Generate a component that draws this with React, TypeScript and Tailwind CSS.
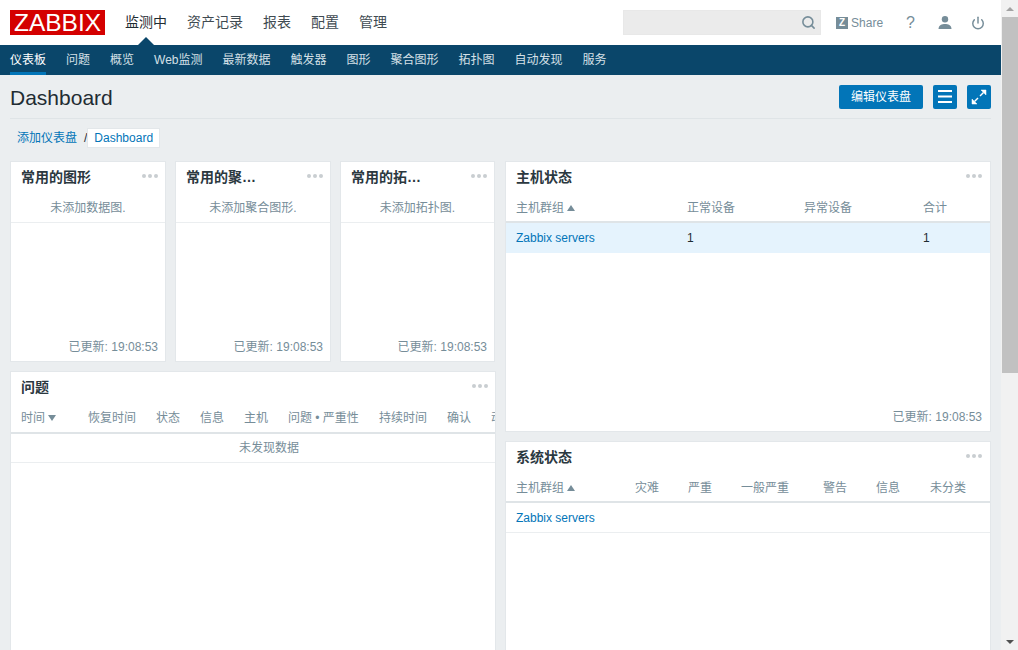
import { Search, Power } from 'lucide-react';

const topMenu = ['资产记录', '报表', '配置', '管理'];
const subMenu = ['问题', '概览', 'Web监测', '最新数据', '触发器', '图形', '聚合图形', '拓扑图', '自动发现', '服务'];

const problemCols = [
  { label: '恢复时间', w: 'w-[68px]' },
  { label: '状态', w: 'w-[44px]' },
  { label: '信息', w: 'w-[44px]' },
  { label: '主机', w: 'w-[44px]' },
  { label: '问题 • 严重性', w: 'w-[91px]' },
  { label: '持续时间', w: 'w-[68px]' },
  { label: '确认', w: 'w-[44px]' },
  { label: '动作', w: 'w-[35px]' },
];

const statusCols = [
  { label: '灾难', w: 'w-[53px]' },
  { label: '严重', w: 'w-[53px]' },
  { label: '一般严重', w: 'w-[82px]' },
  { label: '警告', w: 'w-[53px]' },
  { label: '信息', w: 'w-[54px]' },
  { label: '未分类', w: 'w-[50px]' },
];

function Dots() {
  return (
    <div className="flex gap-[1.5px] mt-[-3px]">
      <span className="w-[4.5px] h-[4.5px] rounded-full bg-[#c9ced1]" />
      <span className="w-[4.5px] h-[4.5px] rounded-full bg-[#c9ced1]" />
      <span className="w-[4.5px] h-[4.5px] rounded-full bg-[#c9ced1]" />
    </div>
  );
}

function WidgetHead({ title, pr = 'pr-[7px]' }: { title: string; pr?: string }) {
  return (
    <div className={`h-[31px] pl-[10px] flex items-center justify-between shrink-0 ${pr}`}>
      <h4 className="text-[14px] font-bold text-[#2b383f] whitespace-nowrap">{title}</h4>
      <Dots />
    </div>
  );
}

function Updated({ pr = 'pr-[7px]' }: { pr?: string }) {
  return <div className={`h-[29px] flex items-center justify-end text-[#768d99] ${pr}`}>已更新: 19:08:53</div>;
}

function FavWidget({ title, empty, className }: { title: string; empty: string; className: string }) {
  return (
    <section className={`h-[201px] bg-white border border-[#e3e7ea] flex flex-col ${className}`}>
      <WidgetHead title={title} />
      <div className="h-[30px] border-b border-[#ebeef0] flex items-center justify-center text-[#768d99]">{empty}</div>
      <div className="flex-1" />
      <Updated />
    </section>
  );
}

function SortUp() {
  return <span className="inline-block ml-[3px] border-x-[4px] border-x-transparent border-b-[6px] border-b-[#768d99]" />;
}

function SortDown() {
  return <span className="inline-block ml-[3px] border-x-[4px] border-x-transparent border-t-[6px] border-t-[#768d99]" />;
}

export default function App() {
  return (
    <div className="h-[650px] overflow-hidden flex text-[12px] text-[#1f2c33] font-['Liberation_Sans','Noto_Sans_CJK_SC',sans-serif]">
      <div className="w-[1001px] h-full overflow-hidden bg-[#ebeef0]">
        <header className="h-[45px] bg-white pl-[10px] pr-[16px] flex items-center">
          <div className="w-[95px] h-[25px] bg-[#d40000] text-white text-[24.5px] leading-[25px] text-center">ZABBIX</div>
          <nav className="ml-[20px] flex gap-[20px] text-[14px] text-[#1f2c33]">
            <a className="relative">
              监测中
              <span className="absolute left-1/2 -translate-x-1/2 top-[25px] border-x-[8px] border-x-transparent border-b-[8px] border-b-[#0a466a]" />
            </a>
            {topMenu.map((m) => (
              <a key={m} className="text-[#3f4b52]">{m}</a>
            ))}
          </nav>
          <div className="ml-auto w-[198px] h-[25px] bg-[#ebebeb] border border-[#e8e8e8] flex items-center justify-end pr-[4px]">
            <Search className="w-[15px] h-[15px] text-[#768d99]" strokeWidth={2.5} />
          </div>
          <div className="ml-[15px] flex items-center text-[#768d99]">
            <span className="w-[12px] h-[12px] bg-[#768d99] text-white text-[10px] leading-[12px] font-bold text-center">Z</span>
            <span className="ml-[3px]">Share</span>
          </div>
          <span className="ml-[23px] text-[16px] text-[#768d99]">?</span>
          <svg className="ml-[23px] text-[#768d99]" width="14" height="13" viewBox="0 0 14 13" fill="currentColor">
            <circle cx="7" cy="3.3" r="3.2" />
            <path d="M0.5 13C0.5 9.2 4 8 7 8s6.500 1.200 6.500 5Z" />
          </svg>
          <Power className="ml-[19px] w-[14px] h-[14px] text-[#768d99]" strokeWidth={2.5} />
        </header>

        <nav className="h-[30px] bg-[#0a466a] pl-[10px] flex gap-[20px] text-[#d5e0e7]">
          <a className="h-full flex items-center text-white border-b-[3px] border-[#0275b8] pt-[3px]">仪表板</a>
          {subMenu.map((m) => (
            <a key={m} className="h-full flex items-center">{m}</a>
          ))}
        </nav>

        <div className="mx-[10px] h-[44px] border-b border-[#dfe4e7] flex items-center justify-between">
          <h1 className="text-[21px] text-[#1f2c33] mt-[2px]">Dashboard</h1>
          <div className="flex gap-[10px]">
            <button className="w-[84px] h-[24px] rounded-[2px] bg-[#0275b8] text-white">编辑仪表盘</button>
            <button className="w-[24px] h-[24px] rounded-[2px] bg-[#0275b8] text-white flex items-center justify-center">
              <svg width="14" height="13" viewBox="0 0 14 13" fill="currentColor">
                <rect x="0" y="0" width="14" height="2" />
                <rect x="0" y="5.500" width="14" height="2" />
                <rect x="0" y="11" width="14" height="2" />
              </svg>
            </button>
            <button className="w-[24px] h-[24px] rounded-[2px] bg-[#0275b8] text-white">
              <svg width="24" height="24" viewBox="0 0 24 24" fill="currentColor" stroke="currentColor">
                <path d="M19 5v5l-5-5Z" strokeWidth="0.5" />
                <path d="M16.500 7.500L13 11" strokeWidth="1.500" fill="none" />
                <path d="M5 19v-5l5 5Z" strokeWidth="0.5" />
                <path d="M7.500 16.500L11 13" strokeWidth="1.500" fill="none" />
              </svg>
            </button>
          </div>
        </div>

        <div className="mt-[9px] ml-[17px] h-[20px] flex items-center text-[#0275b8]">
          <a>添加仪表盘</a>
          <span className="ml-[7px] text-[#1f2c33]">/</span>
          <a className="h-[20px] px-[6px] bg-white border border-[#e3e7ea] flex items-center">Dashboard</a>
        </div>

        <div className="mt-[13px] ml-[10px] flex gap-[9px] items-start">
          <div className="w-[486px] flex flex-col gap-[9px]">
            <div className="flex gap-[9px]">
              <FavWidget title="常用的图形" empty="未添加数据图." className="w-[156px]" />
              <FavWidget title="常用的聚…" empty="未添加聚合图形." className="w-[156px]" />
              <FavWidget title="常用的拓…" empty="未添加拓扑图." className="w-[155px]" />
            </div>
            <section className="h-[400px] bg-white border border-[#e3e7ea] overflow-hidden">
              <WidgetHead title="问题" />
              <div className="w-[516px]">
                <div className="h-[31px] border-b-2 border-[#dfe4e7] pl-[10px] flex items-center text-[#768d99] whitespace-nowrap">
                  <span className="w-[67px] shrink-0 flex items-center">时间<SortDown /></span>
                  {problemCols.map((c) => (
                    <span key={c.label} className={`shrink-0 ${c.w}`}>{c.label}</span>
                  ))}
                </div>
                <div className="h-[29px] border-b border-[#ebeef0] flex items-center justify-center text-[#768d99]">未发现数据</div>
              </div>
            </section>
          </div>

          <div className="w-[486px] flex flex-col gap-[9px]">
            <section className="h-[271px] bg-white border border-[#e3e7ea] flex flex-col">
              <WidgetHead title="主机状态" pr="pr-[8px]" />
              <div className="h-[30px] pt-[2px] border-b-2 border-[#dfe4e7] pl-[10px] flex items-center text-[#768d99]">
                <span className="w-[171px] flex items-center">主机群组<SortUp /></span>
                <span className="w-[117px]">正常设备</span>
                <span className="w-[119px]">异常设备</span>
                <span>合计</span>
              </div>
              <div className="h-[30px] bg-[#e5f3fd] pl-[10px] flex items-center">
                <a className="w-[171px] text-[#0275b8]">Zabbix servers</a>
                <span className="w-[236px]">1</span>
                <span>1</span>
              </div>
              <div className="flex-1" />
              <Updated pr="pr-[8px]" />
            </section>
            <section className="h-[300px] bg-white border border-[#e3e7ea]">
              <WidgetHead title="系统状态" pr="pr-[8px]" />
              <div className="h-[30px] pt-[2px] border-b-2 border-[#dfe4e7] pl-[10px] flex items-center text-[#768d99]">
                <span className="w-[119px] flex items-center">主机群组<SortUp /></span>
                {statusCols.map((c) => (
                  <span key={c.label} className={c.w}>{c.label}</span>
                ))}
              </div>
              <div className="h-[30px] border-b border-[#ebeef0] pl-[10px] flex items-center">
                <a className="text-[#0275b8]">Zabbix servers</a>
              </div>
            </section>
          </div>
        </div>
      </div>

      <div className="w-[17px] h-full bg-[#f1f1f1] flex flex-col items-center">
        <div className="h-[17px] flex items-center justify-center">
          <span className="border-x-[4px] border-x-transparent border-b-[4px] border-b-[#a3a3a3]" />
        </div>
        <div className="w-[16px] self-end h-[356px] bg-[#c1c1c1]" />
        <div className="mt-auto h-[17px] flex items-center justify-center">
          <span className="border-x-[4px] border-x-transparent border-t-[4px] border-t-[#505050]" />
        </div>
      </div>
    </div>
  );
}
